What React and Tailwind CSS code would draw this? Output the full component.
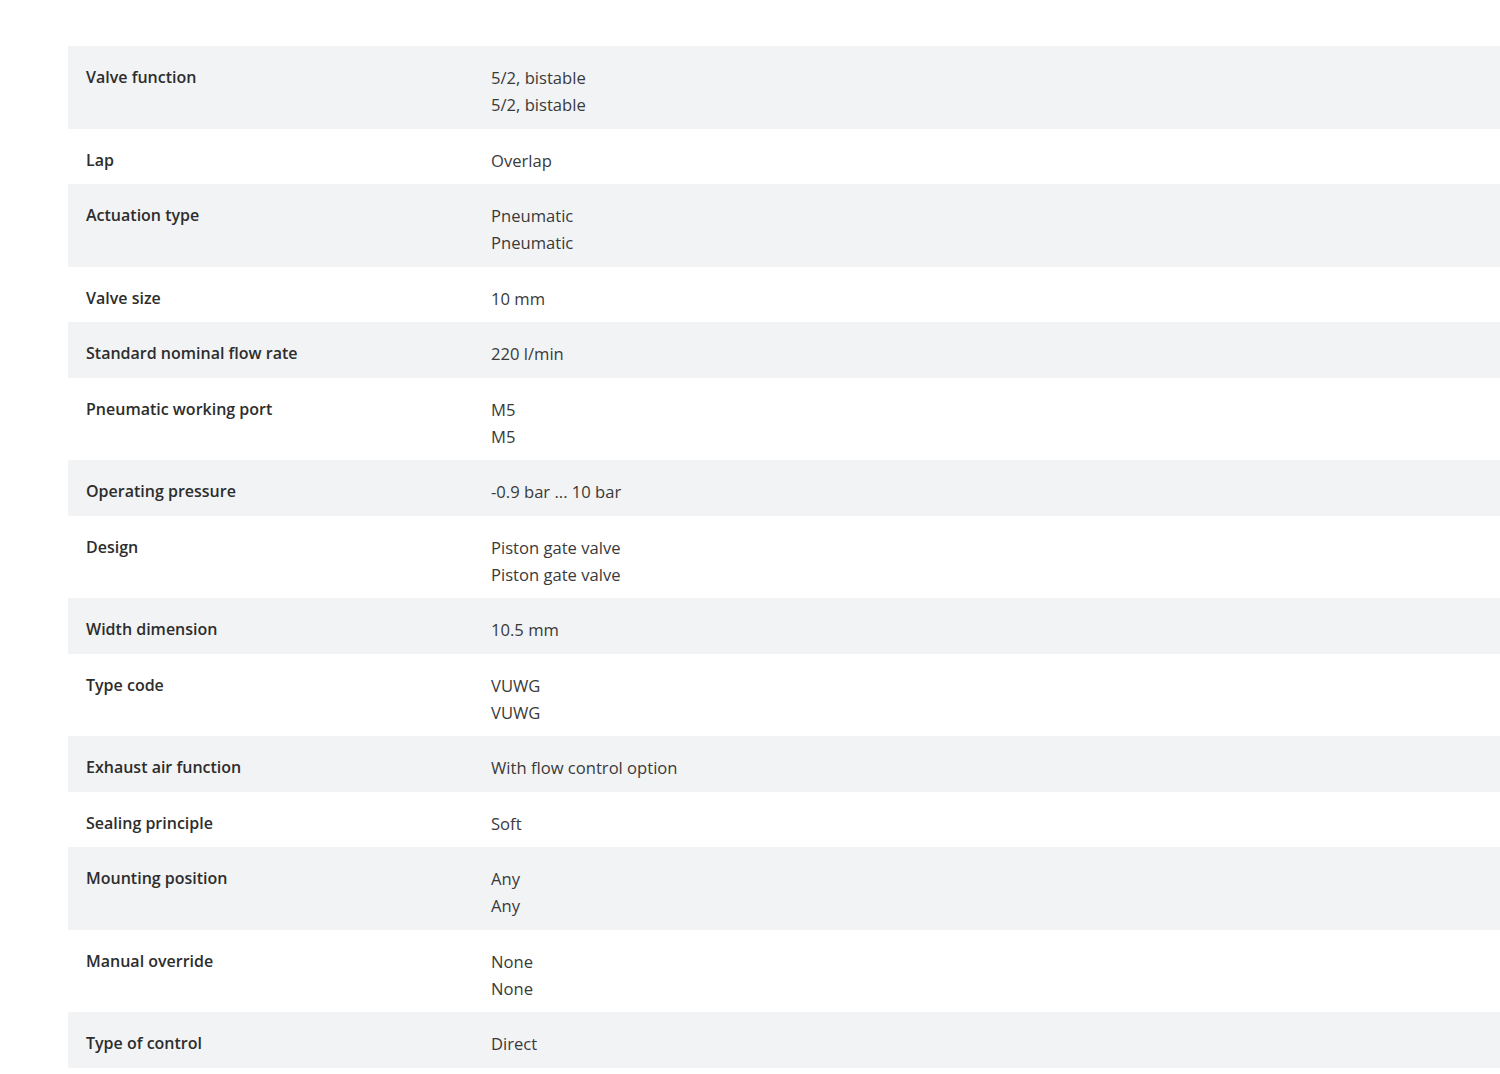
import React from 'react';

const rows = [
  ['Valve function', ['5/2, bistable', '5/2, bistable']],
  ['Lap', ['Overlap']],
  ['Actuation type', ['Pneumatic', 'Pneumatic']],
  ['Valve size', ['10 mm']],
  ['Standard nominal flow rate', ['220 l/min']],
  ['Pneumatic working port', ['M5', 'M5']],
  ['Operating pressure', ['-0.9 bar ... 10 bar']],
  ['Design', ['Piston gate valve', 'Piston gate valve']],
  ['Width dimension', ['10.5 mm']],
  ['Type code', ['VUWG', 'VUWG']],
  ['Exhaust air function', ['With flow control option']],
  ['Sealing principle', ['Soft']],
  ['Mounting position', ['Any', 'Any']],
  ['Manual override', ['None', 'None']],
  ['Type of control', ['Direct']],
];

export default function App() {
  return (
    <div className="min-h-screen bg-white pt-[46px] pl-[68px] font-['Open_Sans',sans-serif] text-[16px] leading-[27px] text-[#333]">
      <div className="flex flex-col">
        {rows.map(([label, values], i) => (
          <div
            key={label}
            className={`flex pt-[18px] pb-[10.5px] ${i % 2 === 0 ? 'bg-[#f2f3f5]' : 'bg-white'}`}
          >
            <div className="w-[423px] shrink-0 pl-[18px] font-semibold text-[#2d2d2d]">{label}</div>
            <div className="flex flex-col text-[16.6px] text-[#3a3a3a]">
              {values.map((v, j) => (
                <span key={j}>{v}</span>
              ))}
            </div>
          </div>
        ))}
      </div>
    </div>
  );
}
